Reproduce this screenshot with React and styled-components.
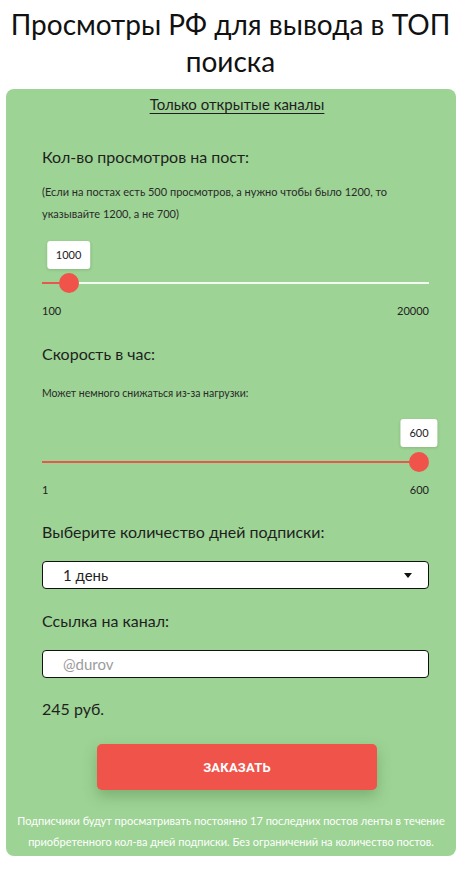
import React from 'react';
import styled, { createGlobalStyle } from 'styled-components';

const GlobalStyle = createGlobalStyle`
  body {
    margin: 0;
    background: #ffffff;
    font-family: Lato, "Open Sans", sans-serif;
    color: #1f1f1f;
  }
`;

const Page = styled.div`
  width: 465px;
  padding-bottom: 12px;
`;

const Title = styled.h1`
  margin: 0;
  padding: 6px 10px 0 6px;
  font-size: 28px;
  font-weight: 400;
  line-height: 37px;
  text-align: center;
  color: #111;
  height: 83px;
`;

const Card = styled.div`
  margin: 0 9px 0 6px;
  background: #9dd394;
  border-radius: 8px;
  padding: 5px 0 4px;
`;

const Body = styled.div`
  padding: 0 27px 0 36px;
`;

const TopLink = styled.a`
  display: block;
  text-align: center;
  font-size: 15px;
  line-height: 20px;
  color: #1f1f1f;
  text-decoration: underline;
  text-underline-offset: 3px;
  padding-left: 12px;
`;

const Label = styled.div`
  margin-top: ${(p) => p.$mt}px;
  font-size: 16px;
  line-height: 20px;
`;

const Hint = styled.div`
  margin-top: ${(p) => p.$mt}px;
  max-width: 362px;
  font-size: ${(p) => p.$size || 11}px;
  line-height: 22px;
  color: #2a2a2a;
`;

const SliderWrap = styled.div`
  margin-top: ${(p) => p.$mt}px;
  padding-top: ${(p) => p.$gap + 28}px;
`;

const Track = styled.div`
  position: relative;
  height: 20px;
  &::before {
    content: '';
    position: absolute;
    left: 0;
    right: 0;
    top: 9px;
    height: 2px;
    background: #f4f8f2;
  }
`;

const Fill = styled.div`
  position: absolute;
  left: 0;
  top: 9px;
  height: 2px;
  background: #e5584b;
`;

const Thumb = styled.div`
  position: absolute;
  top: 0;
  width: 20px;
  height: 20px;
  margin-left: -10px;
  border-radius: 50%;
  background: #ef5349;
`;

const Bubble = styled.div`
  position: absolute;
  bottom: ${(p) => p.$gap + 20}px;
  transform: translateX(-50%);
  height: 28px;
  padding: 0 9px;
  background: #fff;
  border-radius: 3px;
  box-shadow: 0 1px 3px rgba(0, 0, 0, 0.12);
  font-size: 11px;
  line-height: 28px;
  color: #222;
  white-space: nowrap;
`;

const Ends = styled.div`
  display: flex;
  justify-content: space-between;
  margin-top: 10px;
  font-size: 11px;
  line-height: 16px;
  color: #222;
`;

const Field = styled.div`
  margin-top: ${(p) => p.$mt}px;
  height: 28px;
  box-sizing: border-box;
  border: 1px solid #111;
  border-radius: 4px;
  background: #fff;
  display: flex;
  align-items: center;
  justify-content: space-between;
  padding: 0 16px 0 20px;
  font-size: 15px;
  color: ${(p) => (p.$placeholder ? '#9c9c9c' : '#1f1f1f')};
`;

const Caret = styled.span`
  width: 0;
  height: 0;
  border-left: 4px solid transparent;
  border-right: 4px solid transparent;
  border-top: 5px solid #111;
`;

const Price = styled.div`
  margin-top: 21px;
  font-size: 16px;
  line-height: 20px;
`;

const OrderButton = styled.button`
  display: block;
  margin: 25px 0 0 91px;
  width: 280px;
  height: 46px;
  border: none;
  border-radius: 5px;
  background: #ef5349;
  box-shadow: 0 6px 14px rgba(60, 110, 55, 0.35);
  color: #fff;
  font-family: Roboto, Lato, sans-serif;
  font-size: 13px;
  font-weight: 700;
  letter-spacing: 0.2px;
  cursor: pointer;
`;

const Footer = styled.p`
  margin: 20px 0 0;
  padding: 0 4px;
  text-align: center;
  font-size: 11px;
  line-height: 21px;
  color: #fff;
  white-space: nowrap;
`;

// thumb center sits the same way a native range input places it
const thumbPos = (value, min, max, width) =>
  10 + ((value - min) / (max - min)) * (width - 20);

const TRACK_WIDTH = 387;

const RangeSlider = ({ min, max, value, mt, gap }) => {
  const x = thumbPos(value, min, max, TRACK_WIDTH);
  return (
    <SliderWrap $mt={mt} $gap={gap}>
      <Track>
        <Fill style={{ width: x }} />
        <Bubble $gap={gap} style={{ left: x }}>{value}</Bubble>
        <Thumb style={{ left: x }} />
      </Track>
      <Ends>
        <span>{min}</span>
        <span>{max}</span>
      </Ends>
    </SliderWrap>
  );
};

const App = () => {
  return (
    <Page>
      <GlobalStyle />
      <Title>Просмотры РФ для вывода в ТОП поиска</Title>
      <Card>
        <TopLink href="#">Только открытые каналы</TopLink>
        <Body>
          <Label $mt={33}>Кол-во просмотров на пост:</Label>
          <Hint $mt={14}>
            (Если на постах есть 500 просмотров, а нужно чтобы было 1200, то
            указывайте 1200, а не 700)
          </Hint>
          <RangeSlider min={100} max={20000} value={1000} mt={16} gap={4} />

          <Label $mt={25}>Скорость в час:</Label>
          <Hint $mt={18} $size={10.5}>Может немного снижаться из-за нагрузки:</Hint>
          <RangeSlider min={1} max={600} value={600} mt={15} gap={5} />

          <Label $mt={24}>Выберите количество дней подписки:</Label>
          <Field $mt={19}>
            <span>1 день</span>
            <Caret />
          </Field>

          <Label $mt={22}>Ссылка на канал:</Label>
          <Field $mt={19} $placeholder>
            <span>@durov</span>
          </Field>

          <Price>245 руб.</Price>
        </Body>
        <OrderButton>ЗАКАЗАТЬ</OrderButton>
        <Footer>
          Подписчики будут просматривать постоянно 17 последних постов ленты в течение
          <br />
          приобретенного кол-ва дней подписки. Без ограничений на количество постов.
        </Footer>
      </Card>
    </Page>
  );
};

export default App;
